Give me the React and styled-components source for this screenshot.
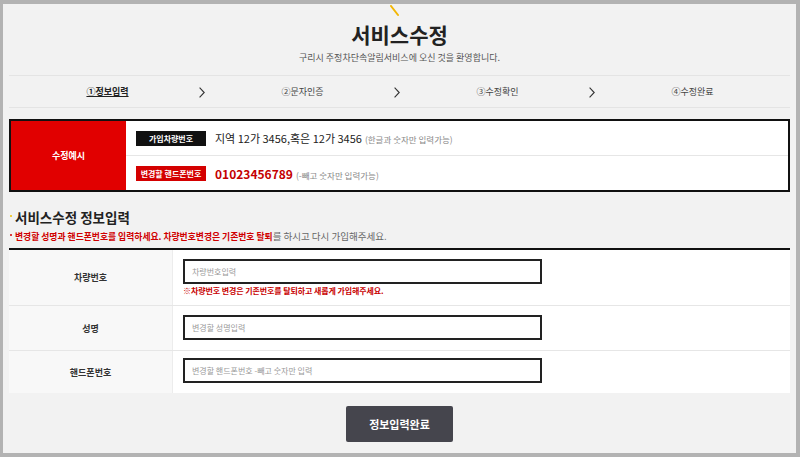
import React from "react";
import styled, { createGlobalStyle } from "styled-components";

const Global = createGlobalStyle`
  html, body { margin: 0; padding: 0; background: #b3b3b3; }
  body { font-family: "Noto Sans CJK KR", "Noto Sans", sans-serif; }
  * { box-sizing: border-box; }
`;

const Frame = styled.div`
  width: 800px;
  height: 457px;
  border-style: solid;
  border-color: #b3b3b3;
  border-width: 4px 4px 4px 3px;
  background: #f2f2f2;
  overflow: hidden;
`;

const Inner = styled.div`
  padding: 0 6px 0 6px;
  display: flex;
  flex-direction: column;
`;

const Header = styled.div`
  display: flex;
  flex-direction: column;
  align-items: center;
`;

const Slash = styled.svg`
  display: block;
  margin-top: 1px;
  margin-left: -10px;
`;

const Title = styled.h1`
  margin: 4px 0 0;
  font-size: 21px;
  line-height: 26px;
  font-weight: 700;
  color: #222;
`;

const Subtitle = styled.p`
  margin: 4px 0 0;
  font-size: 9px;
  line-height: 13px;
  color: #555;
`;

const Steps = styled.div`
  margin-top: 11px;
  display: flex;
  height: 33px;
  border-top: 1px solid #e4e4e4;
  border-bottom: 1px solid #e4e4e4;
  padding-left: 1px;
`;

const Step = styled.div`
  flex: 0 0 195px;
  position: relative;
  display: flex;
  align-items: center;
  justify-content: center;
  font-size: 9px;
  color: ${(p) => (p.$active ? "#222" : "#444")};
  font-weight: ${(p) => (p.$active ? 700 : 400)};
  text-decoration: ${(p) => (p.$active ? "underline" : "none")};
`;

const Chevron = styled.svg`
  position: absolute;
  right: 0px;
  top: 11px;
`;

const ExampleBox = styled.div`
  margin-top: 11px;
  display: flex;
  height: 73px;
  border: 2px solid #111;
  background: #fff;
`;

const ExampleHead = styled.div`
  flex: 0 0 115px;
  background: #e10000;
  color: #fff;
  font-size: 9px;
  font-weight: 700;
  display: flex;
  align-items: center;
  justify-content: center;
`;

const ExampleBody = styled.div`
  flex: 1;
  display: flex;
  flex-direction: column;
`;

const ExampleRow = styled.div`
  flex: 1;
  display: flex;
  align-items: center;
  padding-left: 10px;
  gap: 9px;
  & + & { border-top: 1px solid #e6e6e6; }
`;

const Badge = styled.span`
  width: 70px;
  height: 15px;
  display: inline-flex;
  align-items: center;
  justify-content: center;
  background: ${(p) => (p.$red ? "#d40000" : "#111")};
  color: #fff;
  font-size: 8px;
  font-weight: 700;
`;

const ExText = styled.span`
  color: ${(p) => (p.$red ? "#c40000" : "#222")};
  font-weight: ${(p) => (p.$red ? 700 : 400)};
  font-size: ${(p) => (p.$red ? "12px" : "11px")};
`;

const Hint = styled.span`
  font-size: 8.5px;
  color: #888;
  margin-left: 3px;
  font-weight: 400;
`;

const SectionTitle = styled.h2`
  margin: 16px 0 0;
  font-size: 13.5px;
  line-height: 18px;
  font-weight: 700;
  color: #222;
  display: flex;
  align-items: center;
  gap: 3px;
  padding-left: 1px;
`;

const Dot = styled.span`
  flex: 0 0 2px;
  height: 2px;
  margin-top: ${(p) => p.$mt || 0}px;
  background: ${(p) => p.$color};
  border-radius: 1px;
`;

const Notice = styled.p`
  margin: 1px 0 0;
  line-height: 13px;
  display: flex;
  align-items: center;
  gap: 3px;
  padding-left: 1px;
`;

const Strong = styled.b`
  color: #d00000;
  font-weight: 700;
  font-size: 8.8px;
`;

const Rest = styled.span`
  color: #666;
  font-size: 9.5px;
`;

const FormTable = styled.div`
  margin-top: 5px;
  border-top: 2px solid #111;
  display: flex;
  flex-direction: column;
`;

const FormRow = styled.div`
  display: flex;
  height: ${(p) => p.$h}px;
  & + & { border-top: 1px solid #e6e6e6; }
`;

const Label = styled.div`
  flex: 0 0 164px;
  background: #f8f8f8;
  display: flex;
  align-items: center;
  justify-content: center;
  font-size: 9px;
  font-weight: 700;
  color: #333;
  border-right: 1px solid #ececec;
`;

const Cell = styled.div`
  flex: 1;
  background: #fff;
  padding: ${(p) => p.$pt}px 0 0 10px;
  display: flex;
  flex-direction: column;
`;

const Input = styled.input`
  width: 359px;
  height: 25px;
  border: 2px solid #222;
  padding: 0 7px;
  font-family: inherit;
  font-size: 8px;
  color: #333;
  background: #fff;
  outline: none;
  &::placeholder { color: #999; }
`;

const RedNote = styled.p`
  margin: 1px 0 0;
  font-size: 8px;
  line-height: 12px;
  font-weight: 700;
  color: #c80000;
  letter-spacing: -0.1px;
`;

const ButtonRow = styled.div`
  display: flex;
  justify-content: center;
  margin-top: 13px;
`;

const Submit = styled.button`
  width: 107px;
  height: 36px;
  background: #45454d;
  color: #fff;
  border: none;
  border-radius: 2px;
  font-family: inherit;
  font-size: 11px;
  font-weight: 700;
`;

const ChevronIcon = () => (
  <Chevron width="6" height="11" viewBox="0 0 6 11">
    <polyline points="0.6,0.6 5.2,5.5 0.6,10.4" fill="none" stroke="#333" strokeWidth="1.1" />
  </Chevron>
);

export default function App() {
  const steps = ["①정보입력", "②문자인증", "③수정확인", "④수정완료"];
  return (
    <>
      <Global />
      <Frame>
        <Inner>
          <Header>
            <Slash width="12" height="12" viewBox="0 0 12 12">
              <line x1="2" y1="1" x2="9" y2="10" stroke="#f2b705" strokeWidth="2" strokeLinecap="round" />
            </Slash>
            <Title>서비스수정</Title>
            <Subtitle>구리시 주정차단속알림서비스에 오신 것을 환영합니다.</Subtitle>
          </Header>
          <Steps>
            {steps.map((s, i) => (
              <Step key={s} $active={i === 0}>
                {s}
                {i < steps.length - 1 && <ChevronIcon />}
              </Step>
            ))}
          </Steps>
          <ExampleBox>
            <ExampleHead>수정예시</ExampleHead>
            <ExampleBody>
              <ExampleRow>
                <Badge>가입차량번호</Badge>
                <ExText>
                  지역 12가 3456,혹은 12가 3456<Hint>(한글과 숫자만 입력가능)</Hint>
                </ExText>
              </ExampleRow>
              <ExampleRow>
                <Badge $red>변경할 핸드폰번호</Badge>
                <ExText $red>
                  01023456789<Hint>(-빼고 숫자만 입력가능)</Hint>
                </ExText>
              </ExampleRow>
            </ExampleBody>
          </ExampleBox>
          <SectionTitle>
            <Dot $color="#f2c200" $mt={-3} />
            서비스수정 정보입력
          </SectionTitle>
          <Notice>
            <Dot $color="#d00000" />
            <span>
              <Strong>변경할 성명과 핸드폰번호를 입력하세요. 차량번호변경은 기존번호 탈퇴</Strong>
              <Rest>를 하시고 다시 가입해주세요.</Rest>
            </span>
          </Notice>
          <FormTable>
            <FormRow $h={55}>
              <Label>차량번호</Label>
              <Cell $pt={9}>
                <Input placeholder="차량번호입력" />
                <RedNote>※차량번호 변경은 기존번호를 탈퇴하고 새롭게 가입해주세요.</RedNote>
              </Cell>
            </FormRow>
            <FormRow $h={45}>
              <Label>성명</Label>
              <Cell $pt={9}>
                <Input placeholder="변경할 성명입력" />
              </Cell>
            </FormRow>
            <FormRow $h={43}>
              <Label>핸드폰번호</Label>
              <Cell $pt={7}>
                <Input placeholder="변경할 핸드폰번호 -빼고 숫자만 입력" />
              </Cell>
            </FormRow>
          </FormTable>
          <ButtonRow>
            <Submit>정보입력완료</Submit>
          </ButtonRow>
        </Inner>
      </Frame>
    </>
  );
}
